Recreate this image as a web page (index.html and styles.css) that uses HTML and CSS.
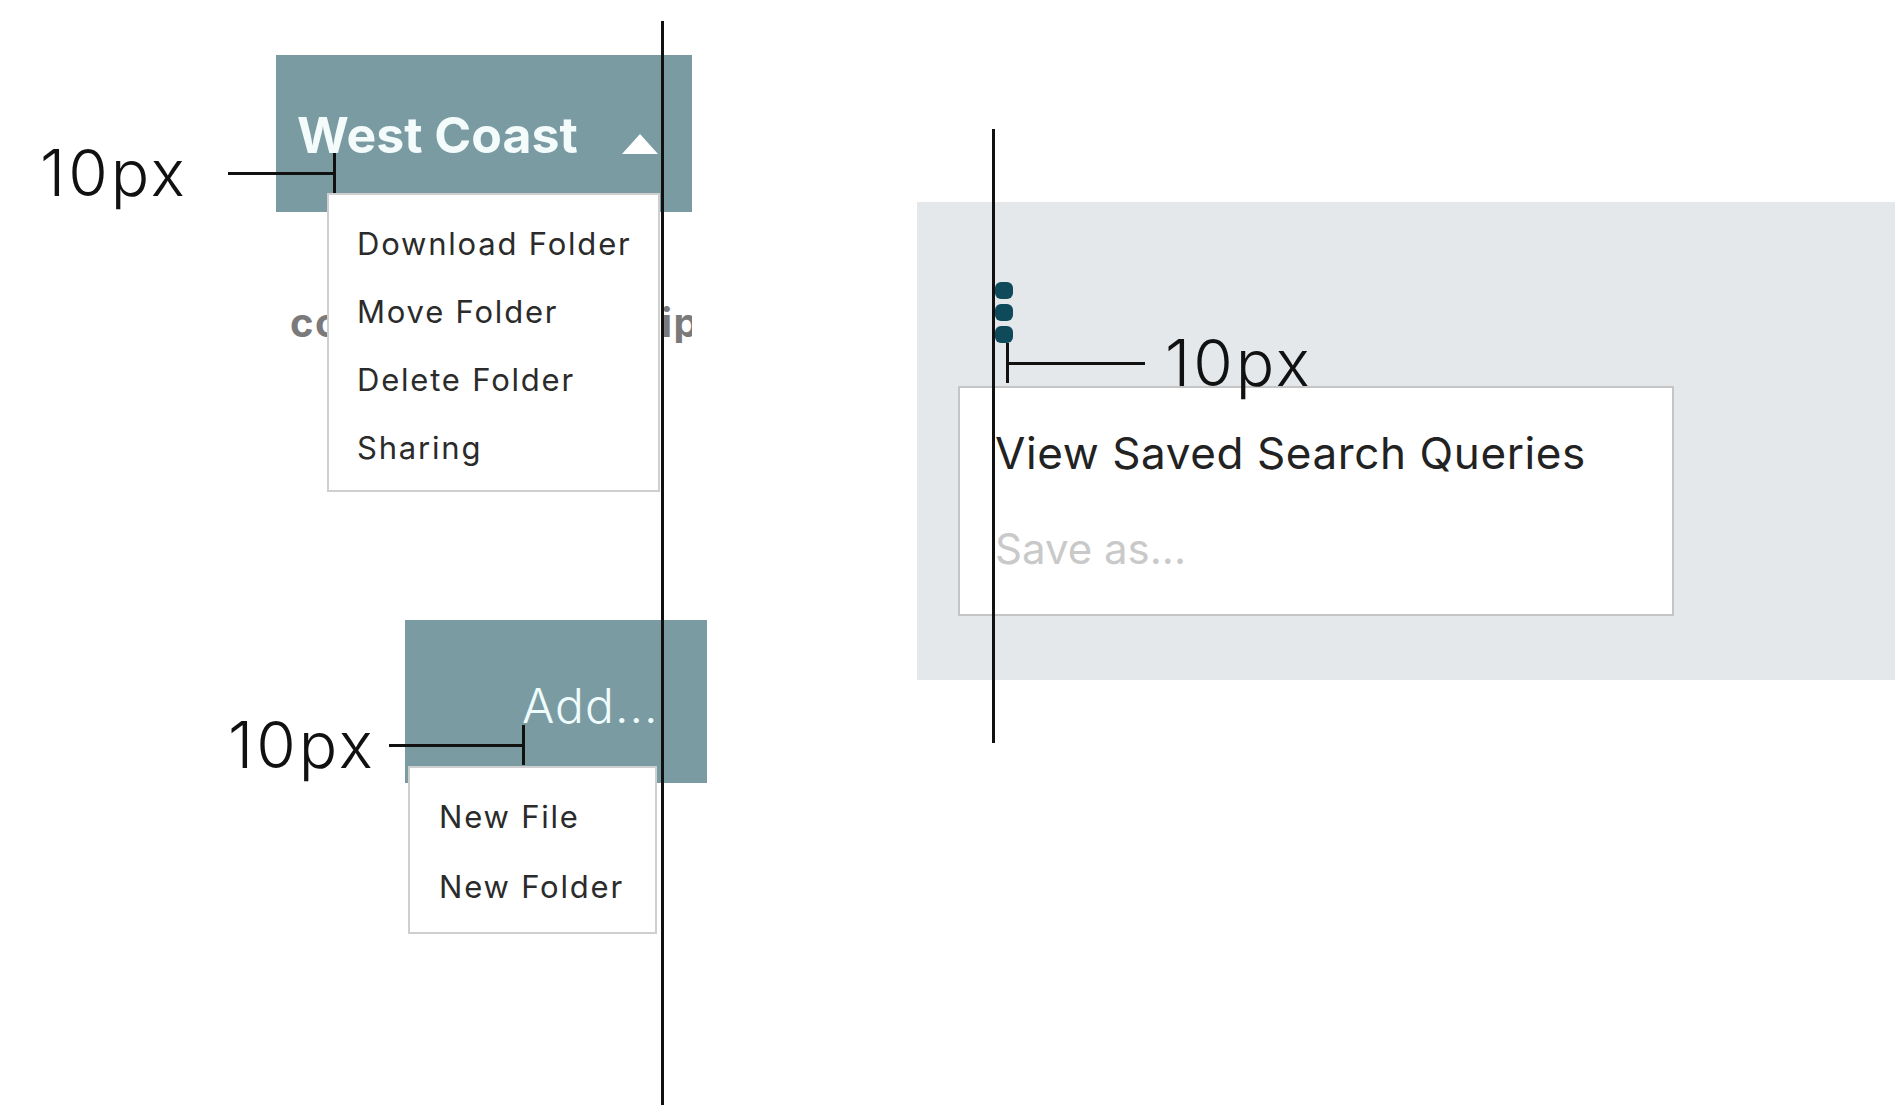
FILE: index.html
```html
<!DOCTYPE html>
<html lang="en">
<head>
  <meta charset="UTF-8" />
  <meta name="viewport" content="width=device-width, initial-scale=1.0"/>
  <title>Dropdown spacing</title>
  <link rel="stylesheet" href="styles.css">
</head>
<body>
  <div class="sheet">
    <div class="left-col">
      <div class="folder">
        <div class="folder-head">
          <span class="folder-name">West Coast</span>
          <svg class="caret" viewBox="0 0 36 20"><polygon points="0,20 18,0 36,20"/></svg>
        </div>
        <div class="folder-row">coastal-photos-trip</div>
        <ul class="menu menu-folder">
          <li>Download Folder</li>
          <li>Move Folder</li>
          <li>Delete Folder</li>
          <li>Sharing</li>
        </ul>
      </div>

      <div class="add">
        <span class="add-label">Add...</span>
        <ul class="menu menu-add">
          <li>New File</li>
          <li>New Folder</li>
        </ul>
      </div>
    </div>

    <div class="panel">
      <div class="kebab"><span></span><span></span><span></span></div>
      <div class="saved">
        <div class="saved-title">View Saved Search Queries</div>
        <input class="saved-input" type="text" placeholder="Save as..." />
      </div>
    </div>

    <!-- guides and measurements -->
    <div class="guide guide-left"></div>
    <div class="guide guide-right"></div>

    <div class="dim dim-folder">
      <span class="dim-label">10px</span>
      <span class="dim-line"></span>
      <span class="dim-tick"></span>
    </div>
    <div class="dim dim-add">
      <span class="dim-label">10px</span>
      <span class="dim-line"></span>
      <span class="dim-tick"></span>
    </div>
    <div class="dim dim-search">
      <span class="dim-tick"></span>
      <span class="dim-line"></span>
      <span class="dim-label">10px</span>
    </div>
  </div>
</body>
</html>
```

FILE: styles.css
```css
body {
  margin: 0;
  font-family: Inter, "Liberation Sans", sans-serif;
  color: #222;
  background: #fff;
}

.sheet {
  position: relative;
  display: flex;
  align-items: flex-start;
  height: 1105px;
  overflow: hidden;
}

.left-col {
  width: 707px;
  flex: none;
  padding-top: 55px;
}

/* folder header with open menu */
.folder {
  position: relative;
  margin-left: 276px;
  width: 416px;
}

.folder-head {
  height: 157px;
  box-sizing: border-box;
  padding: 3px 34px 0 21px;
  display: flex;
  align-items: center;
  background: #7b9ba3;
}

.folder-name {
  font-size: 50px;
  font-weight: 700;
  color: #f4fbfb;
}

.caret {
  margin-left: auto;
  margin-top: 17px;
  width: 36px;
  height: 20px;
  fill: #fff;
}

.folder-row {
  padding: 91px 0 0 14px;
  font-size: 40px;
  font-weight: 700;
  line-height: 40px;
  letter-spacing: 1.4px;
  color: #7a7a7a;
  white-space: nowrap;
  overflow: hidden;
}

.menu {
  position: absolute;
  margin: 0;
  list-style: none;
  box-sizing: border-box;
  background: #fff;
  border: 2px solid #cfcfcf;
  font-size: 31px;
  letter-spacing: 1.8px;
  color: #2b2b2b;
}

.menu-folder {
  left: 51px;
  top: 138px;
  width: 333px;
  height: 299px;
  padding: 15px 0 0 28px;
}

.menu-folder li {
  line-height: 68px;
}

/* add button with open menu */
.add {
  position: relative;
  margin: 277px 0 0 405px;
  width: 302px;
  height: 163px;
  box-sizing: border-box;
  padding: 62px 0 0 117px;
  background: #7b9ba3;
}

.add-label {
  display: block;
  font-size: 48px;
  font-weight: 300;
  line-height: 48px;
  letter-spacing: 1px;
  color: #eefcfc;
}

.menu-add {
  left: 3px;
  top: 146px;
  width: 249px;
  height: 168px;
  padding: 14px 0 0 29px;
}

.menu-add li {
  line-height: 70px;
}

/* saved search panel */
.panel {
  flex: 1;
  margin: 202px 0 0 210px;
  height: 478px;
  box-sizing: border-box;
  padding: 80px 0 0 41px;
  background: #e4e8eb;
}

.kebab {
  display: flex;
  flex-direction: column;
  gap: 5px;
  width: 18px;
  margin-left: 37px;
}

.kebab span {
  height: 17px;
  border-radius: 6px;
  background: #0e4a59;
}

.saved {
  margin-top: 43px;
  width: 716px;
  height: 230px;
  box-sizing: border-box;
  padding: 39px 0 0 35px;
  background: #fff;
  border: 2px solid #c5c5c5;
}

.saved-title {
  font-size: 44px;
  line-height: 52px;
  letter-spacing: 0.6px;
  color: #222;
}

.saved-input {
  display: block;
  margin-top: 44px;
  width: 600px;
  height: 52px;
  padding: 0;
  border: 0;
  outline: none;
  background: transparent;
  font: inherit;
  font-size: 42px;
  line-height: 52px;
}

.saved-input::placeholder {
  color: #c9c9c9;
}

/* guides */
.guide {
  position: absolute;
  width: 3px;
  background: #111;
}

.guide-left {
  left: 661px;
  top: 21px;
  bottom: 0;
}

.guide-right {
  left: 992px;
  top: 129px;
  height: 614px;
}

.dim {
  position: absolute;
  display: flex;
  align-items: center;
  height: 40px;
}

.dim-label {
  width: 150px;
  font-size: 64px;
  font-weight: 300;
  line-height: 40px;
  letter-spacing: 3px;
  color: #111;
}

.dim-line {
  height: 3px;
  background: #111;
}

.dim-tick {
  width: 3px;
  height: 40px;
  background: #111;
}

.dim-folder {
  left: 40px;
  top: 153px;
}

.dim-folder .dim-line {
  width: 105px;
  margin-left: 38px;
}

.dim-add {
  left: 228px;
  top: 725px;
}

.dim-add .dim-line {
  width: 133px;
  margin-left: 11px;
}

.dim-search {
  left: 1006px;
  top: 343px;
}

.dim-search .dim-line {
  width: 136px;
  margin-right: 20px;
}
```
